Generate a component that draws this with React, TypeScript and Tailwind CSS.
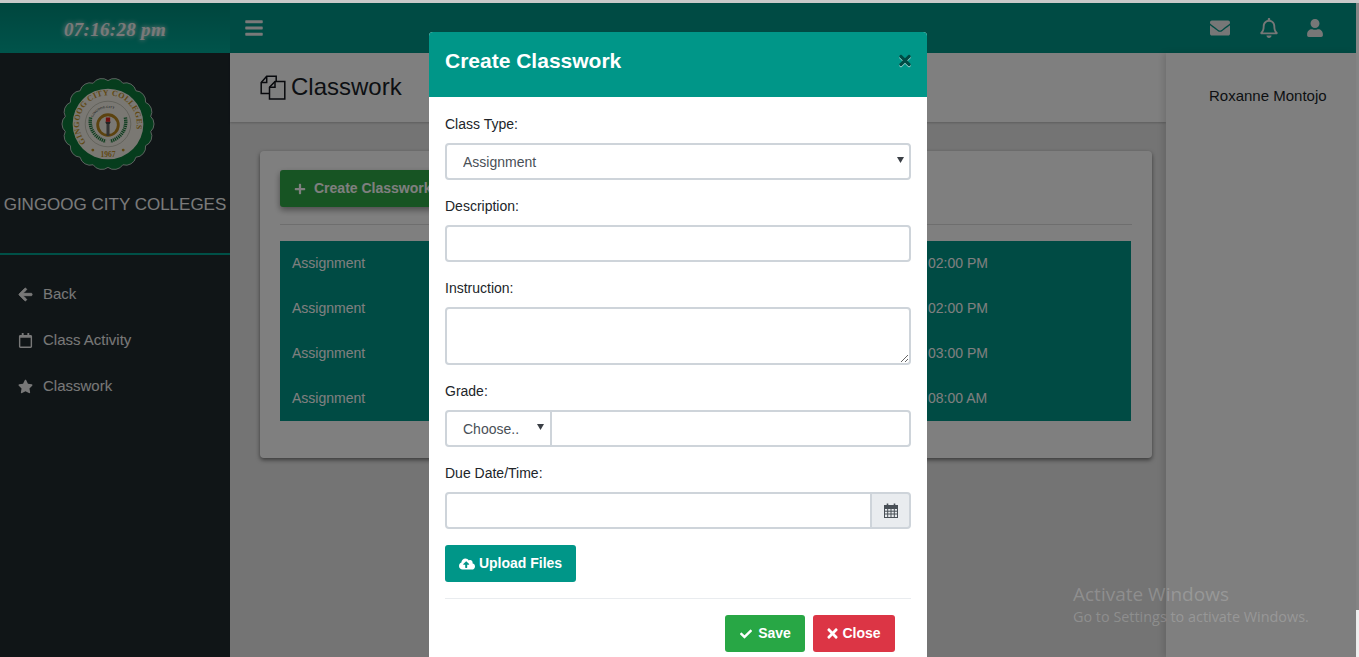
import { FaArrowLeft, FaBars, FaCheck, FaCloudUploadAlt, FaEnvelope, FaPlus, FaRegBell, FaRegCalendar, FaStar, FaTimes, FaUser } from 'react-icons/fa';

const ROWS = ['02:00 PM', '02:00 PM', '03:00 PM', '08:00 AM'];

const MENU = [
  { label: 'Back', icon: FaArrowLeft, extra: 'stroke-[30px]' },
  { label: 'Class Activity', icon: FaRegCalendar, extra: '' },
  { label: 'Classwork', icon: FaStar, extra: '' },
];

function scallopPath(cx: number, cy: number, r: number, count: number) {
  let d = '';
  for (let i = 0; i <= count; i++) {
    const a = (i / count) * Math.PI * 2 - Math.PI / 2;
    const x = (cx + r * Math.cos(a)).toFixed(2);
    const y = (cy + r * Math.sin(a)).toFixed(2);
    d += i === 0 ? `M${x} ${y}` : `A9.5 9.5 0 0 1 ${x} ${y}`;
  }
  return d + 'Z';
}

function Seal() {
  return (
    <svg width="102" height="102" viewBox="0 0 94 94" className="mr-[14px] shrink-0">
      <path d={scallopPath(47, 47, 40, 18)} fill="#0d7a3a" stroke="#e8e8e8" strokeWidth="0.7" />
      <circle cx="47" cy="47" r="32.6" fill="#f4f1e6" />
      <circle cx="47" cy="47" r="21" fill="none" stroke="#8a8a7a" strokeWidth="0.4" />
      <defs>
        <path id="sealTop" d="M26.7 64A26.5 26.5 0 1 1 67.3 64" />
        <path id="sealInner" d="M33 41A15.5 15.5 0 0 1 61 41" />
      </defs>
      <text fontFamily="'Liberation Serif', serif" fontSize="7.4" fontWeight="700" fill="#c2922a" letterSpacing="0.3">
        <textPath href="#sealTop">GINGOOG CITY COLLEGES</textPath>
      </text>
      <text fontFamily="'Liberation Serif', serif" fontSize="3" fontWeight="700" fill="#555555">
        <textPath href="#sealInner">GINGOOG CITY</textPath>
      </text>
      <text x="47" y="77" textAnchor="middle" fontFamily="'Liberation Serif', serif" fontSize="7" fontWeight="700" fill="#c2922a">
        1967
      </text>
      <circle cx="33" cy="71" r="1.3" fill="#c2922a" />
      <circle cx="61" cy="71" r="1.3" fill="#c2922a" />
      <path d="M31 41C29 51 35 60 45 63" fill="none" stroke="#1f7a3f" strokeWidth="3.2" strokeDasharray="1.2 0.7" />
      <path d="M63 41C65 51 59 60 49 63" fill="none" stroke="#1f7a3f" strokeWidth="3.2" strokeDasharray="1.2 0.7" />
      <circle cx="47" cy="48" r="9.5" fill="none" stroke="#b8861f" strokeWidth="2.6" />
      <rect x="45.6" y="47" width="2.8" height="11" fill="#666666" />
      <path d="M44.4 45h5.2l-1 2h-3.2z" fill="#444444" />
      <rect x="45" y="41" width="4" height="4" fill="#e0201f" />
    </svg>
  );
}

function CopyIcon() {
  return (
    <svg width="26" height="25" viewBox="0 0 26 25" fill="none" stroke="#10131a" strokeWidth="1.5">
      <path d="M9 18.5H1.2V7.5L6.7 1.2H16.2V6.5" />
      <path d="M6.7 1.2V7.5H1.2" />
      <path d="M9.5 12.2L15 6.5H24.8V24H9.5Z" />
      <path d="M15 6.5V12.2H9.5" />
    </svg>
  );
}

function GridCalendar() {
  return (
    <svg width="14" height="15" viewBox="0 0 14 15" fill="none" stroke="#495057" strokeWidth="1">
      <rect x="0.5" y="2.5" width="13" height="12" />
      <rect x="0.5" y="2.5" width="13" height="3" fill="#495057" />
      <path d="M0.5 8.2h13M0.5 11h13M3.7 5.5v9M7 5.5v9M10.3 5.5v9" />
      <path d="M3.5 0.5v3M10.5 0.5v3" strokeWidth="1.6" />
    </svg>
  );
}

function Caret({ className }: { className: string }) {
  return (
    <svg width="7" height="6" viewBox="0 0 7 6" className={`absolute pointer-events-none ${className}`}>
      <path d="M0 0h7L3.5 6z" fill="#3a3f45" />
    </svg>
  );
}

const fieldClass = 'block w-full border-2 border-[#ced4da] bg-white text-[14px] text-[#495057] rounded-[4px] outline-none';

export default function App() {
  return (
    <div className="h-[657px] w-full overflow-hidden flex flex-col font-['Liberation_Sans',Arial,sans-serif] bg-[#c9c9c9]">
      <div className="h-[3px] shrink-0" />
      <div className="flex flex-1 min-h-0">
        <div className="relative flex-1 flex min-w-0 bg-[#e8e8e8]">
          {/* sidebar */}
          <aside className="w-[230px] shrink-0 bg-[#202a2f] text-white">
            <div className="h-[50px] flex items-center justify-center pt-[4px] bg-gradient-to-b from-[#008c7c] to-[#00a896]">
              <span className="font-['Liberation_Serif',serif] italic font-bold text-[19px] tracking-[0.3px] text-[#f2f2f2] [text-shadow:0_0_5px_#ffffff]">
                07:16:28 pm
              </span>
            </div>
            <div className="h-[202px] border-b-2 border-[#00a08f] flex flex-col items-center pt-[20px]">
              <Seal />
              <div className="mt-[17px] text-[17px] leading-[26px] text-[#f5f5f5] whitespace-nowrap">GINGOOG CITY COLLEGES</div>
            </div>
            <nav className="pt-4">
              {MENU.map((item) => (
                <div key={item.label} className="h-[46px] flex items-center pl-[18px] gap-[10px] text-[15px] text-[#f0f0f0]">
                  <item.icon className={`w-[15px] h-[15px] shrink-0 stroke-current ${item.extra}`} />
                  <span>{item.label}</span>
                </div>
              ))}
            </nav>
          </aside>

          {/* main column */}
          <div className="flex-1 flex flex-col min-w-0">
            <header className="h-[50px] shrink-0 bg-[#009688] flex items-center text-white">
              <FaBars className="ml-[14px] -mt-[1px] w-[20px] h-[20px] text-[#f2f2f2]" />
              <div className="ml-auto flex items-center text-[#eeeeee]">
                <FaEnvelope className="w-[20px] h-[20px]" />
                <FaRegBell className="ml-[30px] w-[18px] h-[20px]" />
                <FaUser className="ml-[29px] mr-[33px] w-[16px] h-[18px]" />
              </div>
            </header>
            <div className="flex flex-1 min-h-0">
              <main className="flex-1 min-w-0 flex flex-col">
                <div className="h-[69px] shrink-0 bg-white flex items-center pl-[30px] gap-[5px] shadow-[0_1px_2px_rgba(0,0,0,0.2)]">
                  <CopyIcon />
                  <h1 className="text-[24px] text-[#1a1f29] -mt-[2px]">Classwork</h1>
                </div>
                <div className="pt-[29px] px-[30px] pr-[14px]">
                  <div className="h-[307px] bg-white rounded-[4px] shadow-[0_2px_4px_rgba(0,0,0,0.5)] pt-[19px] px-5">
                    <button className="h-[37px] px-[14px] bg-[#2fa846] rounded-[3px] text-white font-bold text-[14px] flex items-center gap-2 shadow-[0_3px_6px_rgba(0,0,0,0.4)]">
                      <FaPlus className="w-3 h-3" />
                      Create Classwork
                    </button>
                    <div className="mt-[17px] border-t border-[#dddddd]" />
                    <div className="mt-4 mr-[1px] bg-[#009688]">
                      {ROWS.map((time, i) => (
                        <div key={i} className="h-[45px] grid grid-cols-[636px_1fr] items-center px-3 text-[14px] text-white">
                          <span>Assignment</span>
                          <span>{time}</span>
                        </div>
                      ))}
                    </div>
                  </div>
                </div>
              </main>
              <aside className="w-[190px] shrink-0 bg-white shadow-[-3px_0_6px_rgba(0,0,0,0.12)] pt-[32px] pl-[43px] text-[15px] leading-[22px] text-[#1a1f29]">
                Roxanne Montojo
              </aside>
            </div>
          </div>

          {/* backdrop */}
          <div className="absolute inset-0 bg-black/50" />

          <div className="absolute left-[1073px] top-[579px] text-white/20 font-['Open_Sans',sans-serif] whitespace-nowrap">
            <div className="text-[19px] leading-[24px]">Activate Windows</div>
            <div className="text-[14.4px] leading-[22px]">Go to Settings to activate Windows.</div>
          </div>

          {/* modal */}
          <div className="absolute left-[429px] top-[29px] w-[498px] h-[640px] bg-white rounded-t-[4px]">
            <div className="h-[65px] bg-[#009688] rounded-t-[4px] flex items-center justify-between pl-4 pr-[16px] pb-[8px]">
              <h2 className="text-[21px] font-bold text-white">Create Classwork</h2>
              <span className="text-[#004b44] [filter:drop-shadow(0_1px_0_rgba(255,255,255,0.6))]">
                <FaTimes className="w-[12px] h-[17px]" />
              </span>
            </div>
            <div className="p-4 pb-0 text-[14px] text-[#212529]">
              <label className="block h-[22px] mb-2 leading-[22px]">Class Type:</label>
              <div className="relative mb-[15px]">
                <select defaultValue="Assignment" className={`${fieldClass} h-[37px] pl-4 pt-[2px] appearance-none`}>
                  <option>Assignment</option>
                </select>
                <Caret className="right-[7px] top-[14px]" />
              </div>

              <label className="block h-[22px] mb-2 leading-[22px]">Description:</label>
              <input type="text" className={`${fieldClass} h-[37px] px-3 mb-[15px]`} />

              <label className="block h-[22px] mb-2 leading-[22px]">Instruction:</label>
              <textarea className={`${fieldClass} h-[58px] px-3 mb-[15px]`} />

              <label className="block h-[22px] mb-2 leading-[22px]">Grade:</label>
              <div className="flex mb-[15px]">
                <div className="relative w-[107px] shrink-0">
                  <select defaultValue="Choose.." className={`${fieldClass} h-[37px] pl-4 pt-[2px] appearance-none rounded-r-none`}>
                    <option>Choose..</option>
                  </select>
                  <Caret className="right-[8px] top-[14px]" />
                </div>
                <input type="text" className={`${fieldClass} h-[37px] px-3 rounded-l-none border-l-0 min-w-0`} />
              </div>

              <label className="block h-[22px] mb-2 leading-[22px]">Due Date/Time:</label>
              <div className="flex mb-4">
                <input type="text" className={`${fieldClass} h-[37px] px-3 rounded-r-none min-w-0`} />
                <div className="w-[39px] h-[37px] shrink-0 bg-[#e9ecef] border-2 border-l-0 border-[#ced4da] rounded-r-[4px] flex items-center justify-center">
                  <GridCalendar />
                </div>
              </div>

              <button className="h-[37px] w-[131px] bg-[#009688] rounded-[3px] text-white font-bold text-[14px] flex items-center justify-center gap-[4px]">
                <FaCloudUploadAlt className="w-4 h-4" />
                Upload Files
              </button>

              <div className="mt-4 border-t border-[#e9ecef]" />

              <div className="mt-4 flex justify-end gap-2 pr-4">
                <button className="h-[37px] w-[80px] bg-[#28a745] rounded-[3px] text-white font-bold text-[14px] flex items-center justify-center gap-[5px]">
                  <FaCheck className="w-[14px] h-[12px]" />
                  Save
                </button>
                <button className="h-[37px] w-[82px] bg-[#dc3545] rounded-[3px] text-white font-bold text-[14px] flex items-center justify-center gap-[4px]">
                  <FaTimes className="w-[11px] h-[15px]" />
                  Close
                </button>
              </div>
            </div>
          </div>
        </div>
        <div className="w-[3px] shrink-0 flex flex-col">
          <div className="h-[607px] bg-[#868686]" />
          <div className="flex-1 bg-[#f1f1f1]" />
        </div>
      </div>
    </div>
  );
}
